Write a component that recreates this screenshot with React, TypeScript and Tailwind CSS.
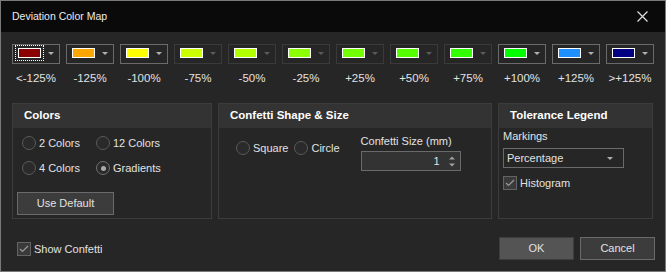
import React from 'react';

const swatches = [
  { label: '<-125%', color: '#8b0000', strong: true, focus: true },
  { label: '-125%', color: '#ffa500', strong: true },
  { label: '-100%', color: '#ffff00', strong: true },
  { label: '-75%', color: '#ccff00' },
  { label: '-50%', color: '#b2ff00' },
  { label: '-25%', color: '#8cff00' },
  { label: '+25%', color: '#73ff00' },
  { label: '+50%', color: '#55ff00' },
  { label: '+75%', color: '#33ff00' },
  { label: '+100%', color: '#00ff00', strong: true },
  { label: '+125%', color: '#1e90ff', strong: true },
  { label: '>+125%', color: '#000080', strong: true },
];

function Arrow({ light }: { light?: boolean }) {
  return (
    <svg width="6" height="3" viewBox="0 0 6 3" className="shrink-0">
      <path d="M0 0h6L3 3z" fill={light ? '#b0b0b0' : '#5a5a5a'} />
    </svg>
  );
}

function Radio({ label, checked }: { label: string; checked?: boolean }) {
  return (
    <div className="flex items-center gap-[3px] h-[14px]">
      <div
        className={`w-[14px] h-[14px] rounded-full border bg-[#2a2a2a] flex items-center justify-center ${
          checked ? 'border-[#707070]' : 'border-[#5a5a5a]'
        }`}
      >
        {checked && <div className="w-[5px] h-[5px] rounded-full bg-[#aaaaaa]" />}
      </div>
      <span className="leading-[14px]">{label}</span>
    </div>
  );
}

function Check({ label }: { label: string }) {
  return (
    <div className="flex items-center gap-[3px]">
      <div className="w-[14px] h-[14px] border border-[#646464] bg-[#3a3a3a] flex items-center justify-center">
        <svg width="10" height="8" viewBox="0 0 10 8">
          <path d="M1 4l2.5 2.5L9 1" stroke="#9a9a9a" strokeWidth="1.2" fill="none" />
        </svg>
      </div>
      <span className="leading-[14px]">{label}</span>
    </div>
  );
}

function Panel({ title, className, children }: { title: string; className: string; children: React.ReactNode }) {
  return (
    <div className={`border border-[#3c3c3c] bg-[#262626] flex flex-col ${className}`}>
      <div className="h-[24px] shrink-0 bg-[#333333] flex items-center pl-[11px] font-bold text-[11.5px] text-white">
        {title}
      </div>
      {children}
    </div>
  );
}

export default function App() {
  return (
    <div
      className="w-[666px] h-[272px] bg-[#262626] border border-[#7a7a7a] text-[#e2e2e2] text-[11px] flex flex-col overflow-hidden"
      style={{ fontFamily: '"Liberation Sans", Arial, sans-serif' }}
    >
      {/* Title bar */}
      <div className="h-[31px] bg-[#0a0a0a] flex items-center justify-between pl-[11px] pr-[17px] shrink-0">
        <span className="text-[10.5px] text-[#ececec]">Deviation Color Map</span>
        <svg width="11" height="11" viewBox="0 0 11 11">
          <path d="M0.5 0.5l10 10M10.5 0.5l-10 10" stroke="#e0e0e0" strokeWidth="1.2" />
        </svg>
      </div>

      {/* Swatches */}
      <div className="flex gap-[6px] pl-[11px] mt-[12px]">
        {swatches.map((s) => (
          <div key={s.label} className="w-[48px] flex flex-col items-center">
            <div
              className={`w-[48px] h-[20px] border flex items-start justify-between pl-[5px] pr-[5px] pt-[3px] ${
                s.strong ? 'border-[#6a6a6a]' : 'border-[#3a3a3a]'
              }`}
            >
              <div
                className={`w-[23px] h-[10px] border border-white ${
                  s.focus ? 'outline-1 outline-dotted outline-white outline-offset-2' : ''
                }`}
                style={{ backgroundColor: s.color }}
              />
              <div className="mt-[4px]">
                <Arrow light={s.strong} />
              </div>
            </div>
            <span className="mt-[6px] text-[11.5px] leading-[16px] whitespace-nowrap">{s.label}</span>
          </div>
        ))}
      </div>

      {/* Panels */}
      <div className="flex gap-[6px] pl-[11px] mt-[17px]">
        <Panel title="Colors" className="w-[200px] h-[116px]">
          <div className="grid grid-cols-[74px_1fr] gap-y-[11px] pl-[9px] pt-[8px]">
            <Radio label="2 Colors" />
            <Radio label="12 Colors" />
            <Radio label="4 Colors" />
            <Radio label="Gradients" checked />
          </div>
          <button className="ml-[4px] mt-[17px] w-[97px] h-[23px] bg-[#3c3c3c] border border-[#6a6a6a] text-[#e2e2e2]">
            Use Default
          </button>
        </Panel>

        <Panel title="Confetti Shape & Size" className="w-[274px] h-[116px]">
          <div className="flex pl-[17px] pt-[5px]">
            <div className="flex gap-[6px] mt-[8px]">
              <Radio label="Square" />
              <Radio label="Circle" />
            </div>
            <div className="ml-[21px] flex flex-col">
              <span className="leading-[16px]">Confetti Size (mm)</span>
              <div className="mt-[2px] w-[100px] h-[20px] bg-[#333333] border border-[#6a6a6a] flex items-center justify-end pr-[5px] gap-[9px]">
                <span>1</span>
                <svg width="6" height="11" viewBox="0 0 6 11">
                  <path d="M0 3.5L3 0.5L6 3.5z" fill="#a0a0a0" />
                  <path d="M0 7.5h6L3 10.5z" fill="#a0a0a0" />
                </svg>
              </div>
            </div>
          </div>
        </Panel>

        <Panel title="Tolerance Legend" className="w-[155px] h-[116px]">
          <div className="flex flex-col pl-[4px]">
            <span className="leading-[16px]">Markings</span>
            <div className="mt-[4px] w-[121px] h-[20px] bg-[#262626] border border-[#6a6a6a] flex items-center justify-between pl-[3px] pr-[10px]">
              <span>Percentage</span>
              <Arrow light />
            </div>
            <div className="mt-[8px]">
              <Check label="Histogram" />
            </div>
          </div>
        </Panel>
      </div>

      {/* Footer */}
      <div className="flex items-center justify-between pl-[16px] pr-[10px] mt-[18px]">
        <Check label="Show Confetti" />
        <div className="flex gap-[6px]">
          <button className="w-[75px] h-[23px] bg-[#545454] border border-[#3e3e3e] text-[#e2e2e2]">OK</button>
          <button className="w-[75px] h-[23px] bg-[#3c3c3c] border border-[#6a6a6a] text-[#e2e2e2]">Cancel</button>
        </div>
      </div>
    </div>
  );
}
